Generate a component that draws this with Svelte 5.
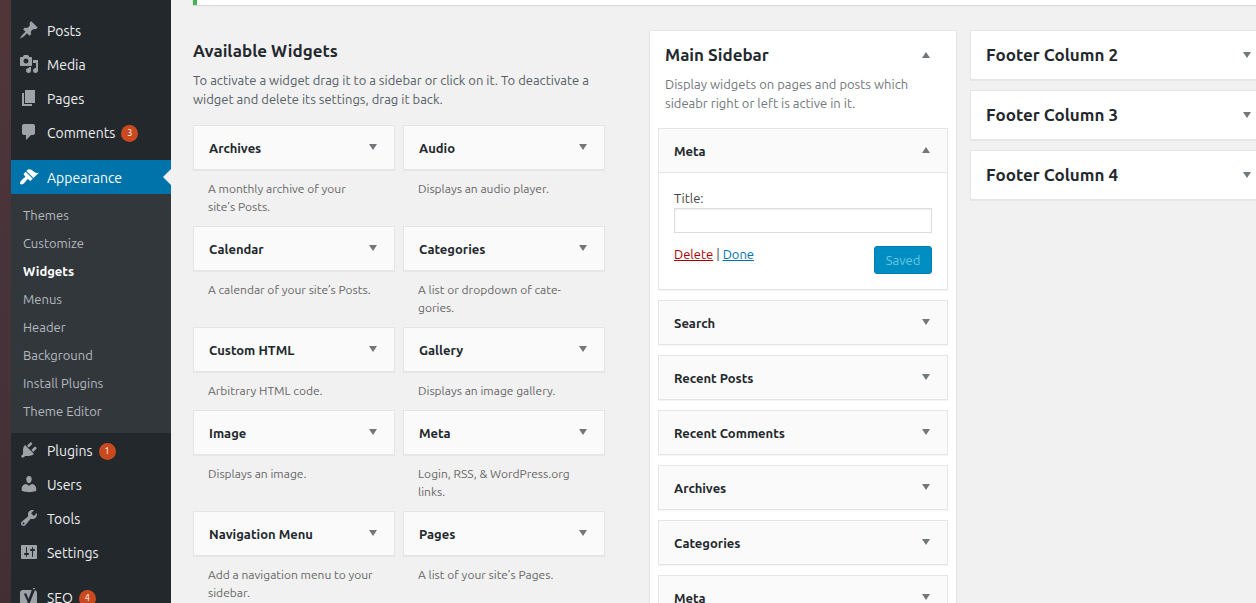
<script>
  const icons = {
    post: 'M10.44 3.02l1.82-1.82 6.36 6.35-1.83 1.82c-1.05-.68-2.48-.57-3.41.36l-.75.75c-.92.93-1.04 2.35-.35 3.41l-1.83 1.82-2.41-2.41-2.8 2.79c-.42.42-3.38 2.71-3.8 2.29s1.86-3.39 2.28-3.81l2.79-2.79L4.1 9.36l1.83-1.82c1.05.69 2.48.57 3.4-.36l.75-.75c.93-.92 1.05-2.35.36-3.41z',
    media: 'M13 11V4c0-.55-.45-1-1-1h-1.67L9 1H5L3.67 3H2c-.55 0-1 .45-1 1v7c0 .55.45 1 1 1h10c.55 0 1-.45 1-1zM7 4.5c1.38 0 2.5 1.12 2.5 2.5S8.38 9.5 7 9.5 4.5 8.38 4.5 7 5.62 4.5 7 4.5zM14 6h5v10.5c0 1.38-1.12 2.5-2.5 2.5S14 17.88 14 16.5s1.12-2.5 2.5-2.5c.17 0 .34.02.5.05V9h-3V6zm-4 8.05V13h2v3.5c0 1.38-1.12 2.5-2.5 2.5S7 17.88 7 16.5 8.12 14 9.5 14c.17 0 .34.02.5.05z',
    page: 'M6 15V2h10v13H6zm-1 1h8v2H3V5h2v11z',
    comments: 'M5 2h9c1.1 0 2 .9 2 2v7c0 1.1-.9 2-2 2h-2l-5 5v-5H5c-1.1 0-2-.9-2-2V4c0-1.1.9-2 2-2z',
    appearance: 'M14.48 11.06L7.41 3.99l1.5-1.5c.5-.56 2.3-.47 3.51.32 1.21.8 1.43 1.28 2.91 2.1 1.18.64 2.45 1.26 4.45.85zm-.71.71L6.7 4.7 4.93 6.47c-.39.39-.39 1.02 0 1.41l1.06 1.06c.39.39.39 1.03 0 1.42-.6.6-1.43 1.11-2.21 1.69-.35.26-.7.53-1.01.84C1.43 14.23.4 16.08 1.4 17.07c.99 1 2.84-.03 4.18-1.36.31-.31.58-.66.85-1.02.57-.78 1.08-1.61 1.69-2.21.39-.39 1.02-.39 1.41 0l1.06 1.06c.39.39 1.02.39 1.41 0z',
    plugins: 'M13.11 4.36L9.87 7.6 8 5.73l3.24-3.24c.35-.34 1.05-.2 1.56.32.52.51.66 1.21.31 1.55zm-8 1.77l.91-1.12 9.01 9.01-1.19.84c-.71.71-2.63 1.16-3.82 1.16H6.14L4.9 17.26c-.59.59-1.54.59-2.12 0-.59-.58-.59-1.53 0-2.12l1.24-1.24v-3.88c0-1.13.4-3.19 1.09-3.89zm7.26 3.97l3.24-3.24c.34-.35 1.04-.21 1.55.31.52.51.66 1.21.31 1.55l-3.24 3.25z',
    users: 'M10 9.25c-2.27 0-2.73-3.44-2.73-3.44C7 4.02 7.82 2 9.97 2c2.16 0 2.98 2.02 2.71 3.81 0 0-.41 3.44-2.68 3.44zm0 2.57L12.72 10c2.39 0 4.52 2.33 4.52 4.53v2.49s-3.65 1.13-7.24 1.13c-3.65 0-7.24-1.13-7.24-1.13v-2.49c0-2.25 1.94-4.48 4.47-4.48z',
    tools: 'M16.68 9.77c-1.34 1.34-3.3 1.67-4.95.99l-5.41 6.52c-.99.99-2.59.99-3.58 0s-.99-2.59 0-3.57l6.52-5.42c-.68-1.65-.35-3.61.99-4.95 1.28-1.28 3.12-1.62 4.72-1.06l-2.89 2.89 2.82 2.82 2.86-2.87c.53 1.58.18 3.39-1.08 4.65zM3.81 16.21c.4.39 1.04.39 1.43 0 .4-.4.4-1.04 0-1.43-.39-.4-1.03-.4-1.43 0-.39.39-.39 1.03 0 1.43z',
    settings: 'M18 16V4c0-.55-.45-1-1-1H3c-.55 0-1 .45-1 1v12c0 .55.45 1 1 1h14c.55 0 1-.45 1-1zM8 11h1c.55 0 1 .45 1 1s-.45 1-1 1H8v1.5c0 .28-.22.5-.5.5s-.5-.22-.5-.5V13H6c-.55 0-1-.45-1-1s.45-1 1-1h1V5.5c0-.28.22-.5.5-.5s.5.22.5.5V11zm5-2h-1c-.55 0-1-.45-1-1s.45-1 1-1h1V5.5c0-.28.22-.5.5-.5s.5.22.5.5V7h1c.55 0 1 .45 1 1s-.45 1-1 1h-1v5.5c0 .28-.22.5-.5.5s-.5-.22-.5-.5V9z'
  };

  const contentMenu = [
    { label: 'Posts', icon: 'post' },
    { label: 'Media', icon: 'media' },
    { label: 'Pages', icon: 'page' },
    { label: 'Comments', icon: 'comments', count: 3 }
  ];
  const submenu = ['Themes', 'Customize', 'Widgets', 'Menus', 'Header', 'Background', 'Install Plugins', 'Theme Editor'];
  const adminMenu = [
    { label: 'Plugins', icon: 'plugins', count: 1 },
    { label: 'Users', icon: 'users' },
    { label: 'Tools', icon: 'tools' },
    { label: 'Settings', icon: 'settings' }
  ];
  const seoMenu = [{ label: 'SEO', icon: 'seo', count: 4 }];

  const available = [
    ['Archives', 'A monthly archive of your site’s Posts.'],
    ['Audio', 'Displays an audio player.'],
    ['Calendar', 'A calendar of your site’s Posts.'],
    ['Categories', 'A list or dropdown of cate\u00adgories.'],
    ['Custom HTML', 'Arbitrary HTML code.'],
    ['Gallery', 'Displays an image gallery.'],
    ['Image', 'Displays an image.'],
    ['Meta', 'Login, RSS, & WordPress.org links.'],
    ['Navigation Menu', 'Add a navigation menu to your sidebar.'],
    ['Pages', 'A list of your site’s Pages.']
  ];
  const placed = ['Search', 'Recent Posts', 'Recent Comments', 'Archives', 'Categories', 'Meta'];
  const footers = ['Footer Column 2', 'Footer Column 3', 'Footer Column 4'];

  let title = $state('');
</script>

{#snippet arrow(up)}
  <svg class="arrow" viewBox="0 0 10 6" aria-hidden="true">
    <path d={up ? 'M1 6L5 0l4 6z' : 'M1 0h8L5 6z'} />
  </svg>
{/snippet}

{#snippet menuItems(items)}
  <ul>
    {#each items as item}
      <li>
        <a class="item" href="#{item.icon}">
          <svg class="icon" viewBox="0 0 20 20" aria-hidden="true">
            {#if item.icon === 'seo'}
              <path d="M4 3h9.5l-.8 2.2h2.1l.8-2.1C17.200 3.400 18 4.600 18 6v13H4c-1.700 0-3-1.300-3-3V6c0-1.700 1.300-3 3-3z" />
              <path class="cut" d="M4.800 6.500h2.600l2.100 5.400L13.800.3h3.100L11 15.500c-.8 2.200-1.800 3.300-4.400 3.400v-2.100c1.200-.1 1.900-.7 2.100-1.700z" />
              <path d="M14.200 1h2l-.5 1.200h-2z" />
            {:else}
              <path fill-rule="evenodd" d={icons[item.icon]} />
            {/if}
          </svg>
          <span>{item.label}</span>
          {#if item.count}<span class="count">{item.count}</span>{/if}
        </a>
      </li>
    {/each}
  </ul>
{/snippet}

<div class="screen">
  <div class="desktop-edge"></div>
  <nav class="menu" aria-label="Main menu">
    {@render menuItems(contentMenu)}
    <div class="current">
      <a class="item active" href="#appearance">
        <svg class="icon" viewBox="0 0 20 20" aria-hidden="true"><path d={icons.appearance} /></svg>
        <span>Appearance</span>
      </a>
      <ul class="submenu">
        {#each submenu as entry}
          <li><a href="#{entry}" class:selected={entry === 'Widgets'}>{entry}</a></li>
        {/each}
      </ul>
    </div>
    {@render menuItems(adminMenu)}
    <div class="seo">{@render menuItems(seoMenu)}</div>
  </nav>

  <main>
    <div class="notice"></div>
    <div class="columns">
      <section class="available">
        <h2>Available Widgets</h2>
        <p class="intro">
          To activate a widget drag it to a sidebar or click on it. To deactivate a widget and delete its settings, drag it back.
        </p>
        <div class="widget-grid">
          {#each available as [name, text]}
            <div>
              <button class="card bar">{name}{@render arrow(false)}</button>
              <p class="about">{text}</p>
            </div>
          {/each}
        </div>
      </section>

      <section class="panel sidebar">
        <button class="panel-title">Main Sidebar{@render arrow(true)}</button>
        <p class="panel-text">Display widgets on pages and posts which sideabr right or left is active in it.</p>
        <div class="stack">
          <div class="card open">
            <button class="bar">Meta{@render arrow(true)}</button>
            <form class="fields" onsubmit={(e) => e.preventDefault()}>
              <label for="meta-title">Title:</label>
              <input id="meta-title" type="text" bind:value={title} />
              <div class="actions">
                <div><a class="delete" href="#delete">Delete</a> | <a href="#done">Done</a></div>
                <button class="save" type="submit" disabled>Saved</button>
              </div>
            </form>
          </div>
          {#each placed as name}
            <button class="card bar">{name}{@render arrow(false)}</button>
          {/each}
        </div>
      </section>

      <div class="footers">
        {#each footers as name}
          <section class="panel">
            <button class="panel-title">{name}{@render arrow(false)}</button>
          </section>
        {/each}
      </div>
    </div>
  </main>
</div>

<style>
  :global(body) {
    background: #f1f1f1;
    overflow: hidden;
  }
  .screen {
    display: flex;
    height: 100vh;
    overflow: hidden;
    color: #444;
    font: 13px/19px Ubuntu, "Open Sans", sans-serif;
  }
  .screen * {
    box-sizing: border-box;
  }
  h2, p, ul {
    margin: 0;
    padding: 0;
  }
  ul {
    list-style: none;
  }
  button {
    font: inherit;
    border: 0;
    cursor: pointer;
  }
  .desktop-edge {
    flex: none;
    width: 11px;
    background: linear-gradient(#513639, #47333a 45%, #432f33);
  }

  .menu {
    flex: none;
    width: 160px;
    padding-top: 14px;
    background: #23282d;
  }
  .item {
    display: flex;
    align-items: center;
    height: 34px;
    padding-left: 8px;
    color: #eee;
    font-size: 14px;
    text-decoration: none;
  }
  .icon {
    width: 20px;
    height: 20px;
    margin-right: 8px;
    margin-bottom: 2px;
    fill: #9ea3a8;
  }
  .icon .cut {
    fill: #23282d;
  }
  .count {
    width: 17px;
    margin-left: 6px;
    border-radius: 50%;
    background: #ca4a1f;
    color: #fff;
    font-size: 9px;
    line-height: 17px;
    text-align: center;
  }
  .current {
    padding: 10px 0 1px;
  }
  .active {
    position: relative;
    padding-top: 2px;
    background: #0073aa;
    color: #fff;
  }
  .active .icon {
    fill: #fff;
  }
  .active::after {
    content: "";
    position: absolute;
    right: 0;
    top: 9px;
    border: 8px solid transparent;
    border-right-color: #f1f1f1;
    border-left: 0;
  }
  .submenu {
    padding: 7px 0 8px;
    background: #32373c;
  }
  .submenu a {
    display: block;
    padding-left: 12px;
    color: #b4b9be;
    line-height: 28px;
    text-decoration: none;
  }
  .submenu .selected {
    color: #fff;
    font-weight: 700;
  }
  .seo {
    padding-top: 11px;
  }

  main {
    flex: 1;
    min-width: 0;
    padding-left: 22px;
    overflow: hidden;
  }
  .notice {
    height: 5px;
    border-left: 4px solid #46b450;
    background: #fff;
    box-shadow: 0 1px 1px rgba(0, 0, 0, 0.1);
  }
  .columns {
    display: grid;
    grid-template-columns: minmax(0, 1fr) 308px 308px;
    align-items: start;
    column-gap: 13px;
    margin: 25px -22px 0 0;
  }
  .available {
    padding: 10px 31px 0 0;
  }
  h2, .panel-title {
    color: #23282d;
    font-size: 17px;
    font-weight: 700;
    line-height: 22px;
  }
  .intro {
    padding: 9px 0 16px;
    color: #555d66;
  }
  .widget-grid {
    display: grid;
    grid-template-columns: repeat(2, minmax(0, 1fr));
    column-gap: 8px;
  }
  .card {
    border: 1px solid #e5e5e5;
    box-shadow: 0 1px 1px rgba(0, 0, 0, 0.04);
  }
  .bar {
    display: flex;
    align-items: center;
    justify-content: space-between;
    width: 100%;
    height: 45px;
    padding: 2px 16px 0 15px;
    background: #fafafa;
    color: #23282d;
    font-weight: 700;
    text-align: left;
  }
  .arrow {
    flex: none;
    width: 10px;
    height: 6px;
    fill: #72777c;
  }
  .bar .arrow {
    margin-bottom: 3px;
  }
  .about {
    padding: 10px 20px 10px 15px;
    color: #666;
    font-size: 12px;
    line-height: 18px;
  }

  .panel {
    border: 1px solid #e5e5e5;
    background: #fff;
    box-shadow: 0 1px 1px rgba(0, 0, 0, 0.04);
  }
  .panel-title {
    display: flex;
    align-items: center;
    justify-content: space-between;
    width: 100%;
    height: 48px;
    padding: 0 25px 0 15px;
    background: none;
    text-align: left;
  }
  .panel-text {
    padding: 0 25px 0 15px;
    margin-top: -4px;
    color: #72777c;
  }
  .stack {
    display: grid;
    gap: 10px;
    padding: 15px 8px;
  }
  .open .bar {
    height: 44px;
    border-bottom: 1px solid #e5e5e5;
  }
  .fields {
    padding: 16px 15px 15px;
  }
  .fields label {
    display: block;
  }
  .fields input {
    display: block;
    width: 100%;
    height: 25px;
    border: 1px solid #ddd;
    box-shadow: inset 0 1px 2px rgba(0, 0, 0, 0.07);
    font: inherit;
  }
  .actions {
    display: flex;
    justify-content: space-between;
    padding-top: 13px;
    line-height: 17px;
  }
  .actions a {
    color: #0073aa;
  }
  .actions .delete {
    color: #a00;
  }
  .save {
    min-width: 58px;
    height: 28px;
    padding: 0 10px;
    border: 1px solid #007cb2;
    border-radius: 3px;
    background: #008ec2;
    color: #66c6e4;
  }
  .footers {
    display: grid;
    gap: 10px;
  }
</style>
